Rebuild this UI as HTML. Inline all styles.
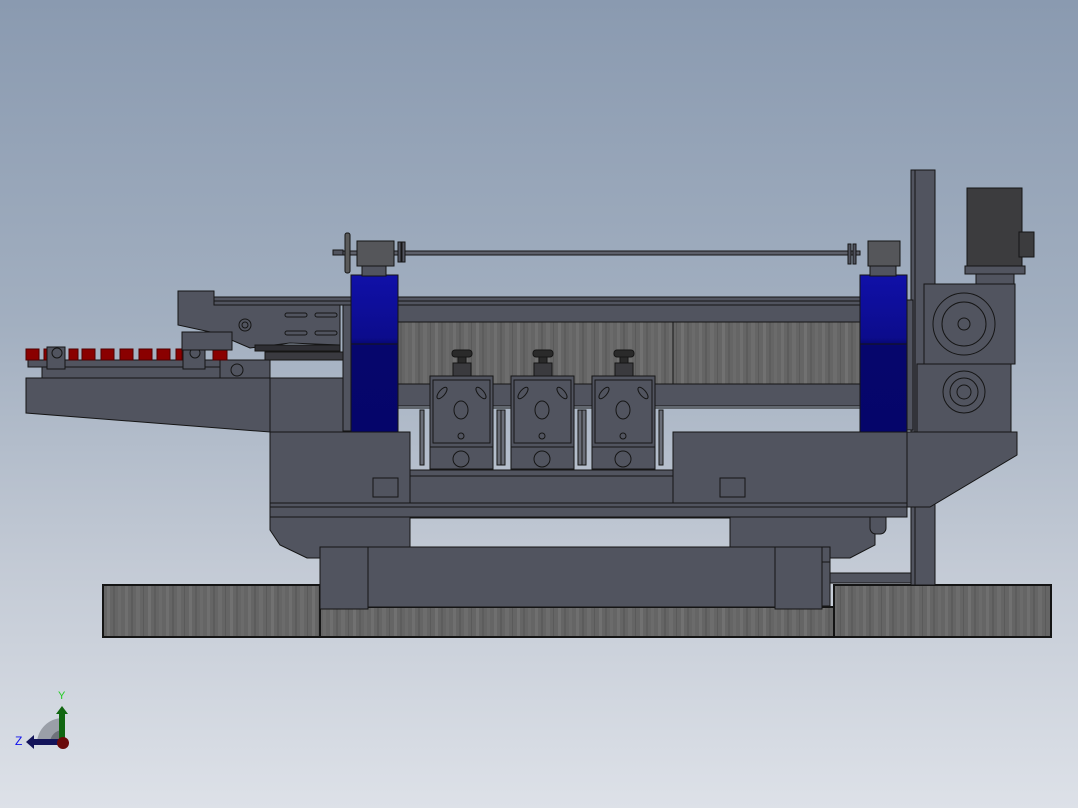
<!DOCTYPE html>
<html><head><meta charset="utf-8"><style>
html,body{margin:0;padding:0;width:1078px;height:808px;overflow:hidden}
body{background:linear-gradient(180deg,#8a9ab0 0%,#a2afc0 40%,#c3cad5 70%,#dde1e8 100%)}
svg{position:absolute;left:0;top:0}
</style></head><body>
<svg width="1078" height="808" viewBox="0 0 1078 808" xmlns="http://www.w3.org/2000/svg">
<defs>
<pattern id="tex" width="41" height="60" patternUnits="userSpaceOnUse">
<rect width="41" height="60" fill="#656565"/>
<rect x="2" width="3" height="60" fill="#6f6f6f"/><rect x="8" width="2" height="60" fill="#5c5c5c"/>
<rect x="13" width="4" height="60" fill="#6d6d6d"/><rect x="20" width="1" height="60" fill="#5a5a5a"/>
<rect x="25" width="3" height="60" fill="#717171"/><rect x="31" width="2" height="60" fill="#5d5d5d"/>
<rect x="36" width="3" height="60" fill="#6b6b6b"/>
</pattern>
<linearGradient id="blue" x1="0" y1="0" x2="0" y2="1">
<stop offset="0" stop-color="#1010a8"/><stop offset="0.4" stop-color="#0c0c8c"/><stop offset="0.45" stop-color="#06066c"/><stop offset="1" stop-color="#05056a"/>
</linearGradient>
</defs>
<g stroke="#151515" stroke-width="1" fill="#51545f">
<rect x="103" y="585" width="217" height="52" fill="url(#tex)" stroke-width="2"/>
<rect x="320" y="607" width="514" height="30" fill="url(#tex)" stroke-width="2"/>
<rect x="834" y="585" width="217" height="52" fill="url(#tex)" stroke-width="2"/>
<rect x="911" y="170" width="24" height="415"/>
<line x1="915" y1="170" x2="915" y2="585"/>
<rect x="830" y="573" width="81" height="10"/>
<polygon points="270,517 410,517 410,558 307,558 280,545 270,530"/>
<polygon points="730,517 875,517 875,545 850,558 730,558"/>
<rect x="870" y="507" width="16" height="27" rx="6"/>
<rect x="320" y="547" width="510" height="60"/>
<rect x="320" y="547" width="48" height="62"/>
<rect x="775" y="547" width="47" height="62"/>
<rect x="822" y="562" width="8" height="44"/>
<rect x="410" y="507" width="320" height="11" fill="url(#tex)"/>
<rect x="270" y="503" width="637" height="14"/>
<line x1="270" y1="507" x2="907" y2="507"/>
<rect x="214" y="297" width="690" height="4"/>
<rect x="214" y="301" width="690" height="4"/>
<rect x="398" y="305" width="462" height="17"/>
<rect x="398" y="322" width="462" height="62" fill="url(#tex)"/>
<line x1="673" y1="322" x2="673" y2="384"/>
<rect x="398" y="384" width="462" height="22"/>
<line x1="398" y1="408" x2="860" y2="408"/>
<polygon points="26,378 270,378 270,432 26,413"/>
<rect x="270" y="378" width="75" height="54"/>
<rect x="28" y="360" width="240" height="7"/>
<rect x="42" y="367" width="220" height="11"/>
<rect x="220" y="360" width="50" height="18"/>
<circle cx="237" cy="370" r="6"/>
<g fill="#8a0000" stroke="#500000">
<rect x="26" y="349" width="13" height="11"/><rect x="44" y="349" width="13" height="11"/>
<rect x="69" y="349" width="9" height="11"/><rect x="82" y="349" width="13" height="11"/>
<rect x="101" y="349" width="13" height="11"/><rect x="120" y="349" width="13" height="11"/>
<rect x="139" y="349" width="13" height="11"/><rect x="157" y="349" width="13" height="11"/>
<rect x="176" y="349" width="6" height="11"/><rect x="213" y="349" width="14" height="11"/>
</g>
<rect x="47" y="347" width="18" height="22"/><circle cx="57" cy="353" r="5"/>
<rect x="183" y="347" width="22" height="22"/><circle cx="195" cy="353" r="5"/>
<polygon points="178,291 214,291 214,305 340,305 340,345 290,343 250,348 215,333 178,325"/>
<circle cx="245" cy="325" r="6" fill="none"/><circle cx="245" cy="325" r="3" fill="none"/>
<rect x="182" y="332" width="50" height="18"/>
<rect x="255" y="345" width="85" height="6" fill="#2e2e33"/>
<rect x="265" y="352" width="80" height="8" fill="#3a3a40"/>
<g fill="none"><rect x="285" y="313" width="22" height="4" rx="2"/><rect x="315" y="313" width="22" height="4" rx="2"/><rect x="285" y="331" width="22" height="4" rx="2"/><rect x="315" y="331" width="22" height="4" rx="2"/></g>
<rect x="343" y="305" width="8" height="126"/>
<rect x="270" y="432" width="140" height="71"/>
<rect x="373" y="478" width="25" height="19" fill="none"/>
<rect x="410" y="470" width="263" height="33"/>
<line x1="410" y1="476" x2="673" y2="476"/>
<rect x="673" y="432" width="234" height="71"/>
<rect x="720" y="478" width="25" height="19" fill="none"/>
<polygon points="907,432 1017,432 1017,455 930,507 907,507"/>
<g id="h">
<rect x="420" y="410" width="4" height="55" fill="#6a6e78"/>
<rect x="497" y="410" width="4" height="55" fill="#6a6e78"/>
<rect x="452" y="350" width="20" height="7" rx="3" fill="#2a2a2a"/>
<rect x="458" y="357" width="8" height="6" fill="#2a2a2a"/>
<rect x="453" y="363" width="18" height="13" fill="#3a3a3e"/>
<rect x="430" y="376" width="63" height="71"/>
<rect x="433" y="380" width="57" height="63" fill="none"/>
<ellipse cx="461" cy="410" rx="7" ry="9" fill="none"/>
<ellipse cx="442" cy="393" rx="3" ry="7" transform="rotate(40 442 393)" fill="none"/>
<ellipse cx="481" cy="393" rx="3" ry="7" transform="rotate(-40 481 393)" fill="none"/>
<circle cx="461" cy="436" r="3" fill="none"/>
<rect x="430" y="447" width="63" height="22"/>
<circle cx="461" cy="459" r="8"/>
</g>
<use href="#h" x="81"/><use href="#h" x="162"/>
<rect x="351" y="275" width="47" height="157" fill="url(#blue)"/>
<line x1="351" y1="344" x2="398" y2="344"/>
<rect x="860" y="275" width="47" height="157" fill="url(#blue)"/>
<line x1="860" y1="344" x2="907" y2="344"/>
<rect x="340" y="251" width="520" height="4" fill="#5d606a"/>
<rect x="333" y="250" width="10" height="5"/>
<rect x="345" y="233" width="5" height="40" rx="2" fill="#5a5a5a"/>
<rect x="357" y="241" width="37" height="25" fill="#55565a"/>
<rect x="362" y="266" width="24" height="10"/>
<rect x="398" y="242" width="3" height="20"/><rect x="402" y="242" width="3" height="20"/>
<rect x="848" y="244" width="3" height="20"/><rect x="853" y="244" width="3" height="20"/>
<rect x="868" y="241" width="32" height="25" fill="#55565a"/>
<rect x="870" y="266" width="26" height="10"/>
<rect x="967" y="188" width="55" height="78" fill="#3c3c3e"/>
<rect x="1019" y="232" width="15" height="25" fill="#3c3c3e"/>
<rect x="965" y="266" width="60" height="8"/>
<rect x="976" y="274" width="38" height="10"/>
<rect x="924" y="284" width="91" height="80"/>
<circle cx="964" cy="324" r="31" fill="none"/><circle cx="964" cy="324" r="22" fill="none"/><circle cx="964" cy="324" r="6" fill="none"/>
<rect x="917" y="364" width="94" height="68"/>
<circle cx="964" cy="392" r="21" fill="none"/><circle cx="964" cy="392" r="14" fill="none"/><circle cx="964" cy="392" r="7" fill="none"/>
<rect x="907" y="300" width="6" height="130"/>
</g>
<path d="M37 742 A26 26 0 0 1 62 718 L62 742Z" fill="#9a9fa8"/>
<path d="M50 742 A13 13 0 0 1 62 730 L62 742Z" fill="#6e727a"/>
<rect x="59" y="713" width="6" height="29" fill="#116611"/>
<polygon points="56,714 62,706 68,714" fill="#116611"/>
<rect x="33" y="739" width="29" height="6" fill="#14145a"/>
<polygon points="34,735 26,742 34,749" fill="#14145a"/>
<circle cx="63" cy="743" r="6" fill="#6a0a0a"/>
<text x="58" y="699" font-family="Liberation Sans, sans-serif" font-size="11" fill="#22cc22">Y</text>
<text x="15" y="745" font-family="Liberation Sans, sans-serif" font-size="12" fill="#1010ee">Z</text>
</svg>
</body></html>
